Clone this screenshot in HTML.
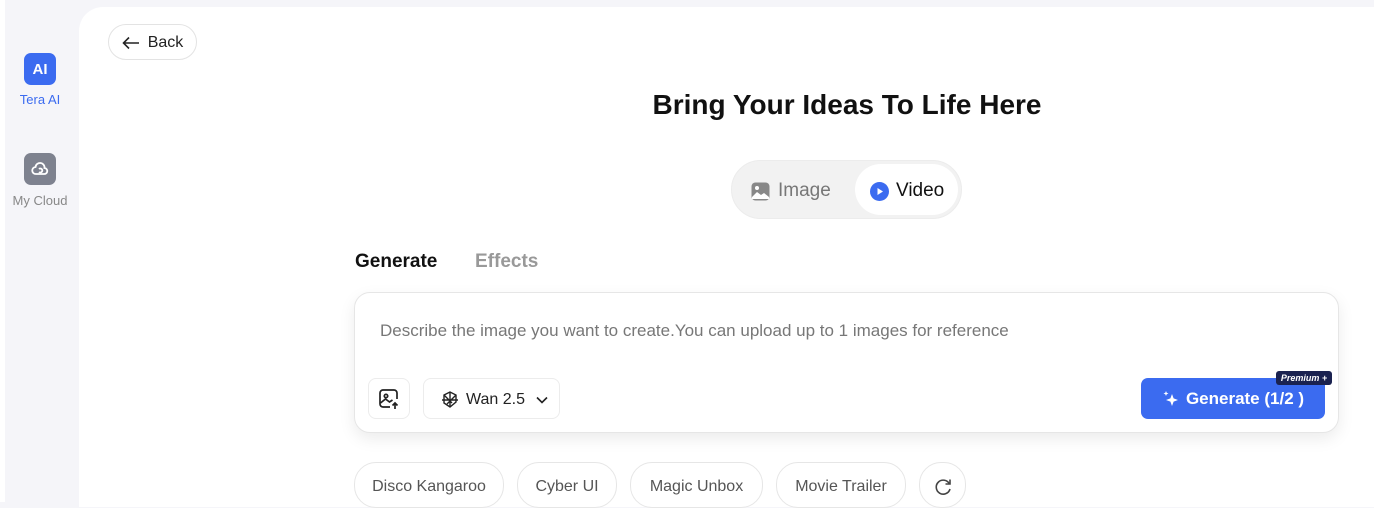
<!DOCTYPE html>
<html><head><meta charset="utf-8"><style>
*{box-sizing:border-box;margin:0;padding:0}
body{width:1374px;height:502px;overflow:hidden;background:#f5f5f9;font-family:"Liberation Sans","DejaVu Sans",sans-serif;position:relative}
.edge{position:absolute;left:0;top:0;width:5px;height:502px;background:#fff}
.main{position:absolute;left:79px;top:7px;width:1300px;height:500px;background:#fff;border-top-left-radius:24px}
.abs{position:absolute}
.sideicon{position:absolute;left:24px;width:32px;height:32px;border-radius:7px;display:flex;align-items:center;justify-content:center}
.sidelbl{position:absolute;width:80px;left:0;text-align:center;font-size:13px}
.pill{position:absolute;border:1px solid #e6e6e6;border-radius:22px;height:46px;top:462px;font-size:16px;color:#555;display:flex;align-items:center;justify-content:center;padding-top:4px}
</style></head><body>
<div class="edge"></div>
<div class="sideicon" style="top:53px;background:#3b6bf0;color:#fff;font-weight:bold;font-size:15px">AI</div>
<div class="sidelbl" style="top:92px;color:#3b6bf0">Tera AI</div>
<div class="sideicon" style="top:153px;background:#7e828f">
<svg width="20" height="20" viewBox="0 0 20 20" fill="none" stroke="#fff" stroke-width="1.8"><path d="M6 15h8a3 3 0 0 0 0.5-6A4.5 4.5 0 0 0 5.5 8 3.5 3.5 0 0 0 6 15z"/><path d="M9 13a2 2 0 1 0 0-3"/></svg></div>
<div class="sidelbl" style="top:193px;color:#888">My Cloud</div>
<div class="main"></div>
<div class="abs" style="left:108px;top:24px;width:89px;height:36px;border:1px solid #e3e3e3;border-radius:18px;display:flex;align-items:center;justify-content:center;gap:8px;font-size:16px;color:#222;padding-top:2px">
<svg width="18" height="14" viewBox="0 0 18 14" fill="none" stroke="#222" stroke-width="1.6"><path d="M17 7H2M7 1.5L1.5 7 7 12.5"/></svg>Back</div>
<div class="abs" style="left:0;width:1694px;top:89px;text-align:center;font-size:28px;font-weight:bold;color:#111">Bring Your Ideas To Life Here</div>
<div class="abs" style="left:731px;top:160px;width:231px;height:59px;background:#f2f2f2;border-radius:30px;border:1px solid #ececec"></div>
<div class="abs" style="left:855px;top:164px;width:103px;height:51px;background:#fff;border-radius:26px"></div>
<div class="abs" style="left:751px;top:180px;display:flex;align-items:center;gap:8px;font-size:19px;color:#777">
<svg width="19" height="19" viewBox="0 0 19 19"><rect x="0.5" y="0.5" width="18" height="18" rx="4" fill="#888"/><circle cx="6" cy="6" r="2" fill="#fff"/><path d="M1 15l5-5 4 3 3-2 5 4v2H1z" fill="#fff"/></svg>Image</div>
<div class="abs" style="left:870px;top:180px;display:flex;align-items:center;gap:7px;font-size:19px;color:#111">
<svg width="19" height="19" viewBox="0 0 19 19"><circle cx="9.5" cy="9.5" r="9.5" fill="#3b6bf0"/><path d="M7.5 6v7l5.5-3.5z" fill="#fff"/></svg>Video</div>
<div class="abs" style="left:355px;top:251px;font-size:19px;font-weight:bold;color:#111">Generate</div>
<div class="abs" style="left:475px;top:251px;font-size:19px;font-weight:bold;color:#999">Effects</div>
<div class="abs" style="left:354px;top:292px;width:985px;height:141px;border:1px solid #e6e6e6;border-radius:16px;box-shadow:0 6px 16px rgba(0,0,0,0.08);background:#fff"></div>
<div class="abs" style="left:380px;top:321px;font-size:17px;color:#777">Describe the image you want to create.You can upload up to 1 images for reference</div>
<div class="abs" style="left:368px;top:378px;width:42px;height:41px;border:1px solid #ececec;border-radius:8px;display:flex;align-items:center;justify-content:center">
<svg width="22" height="22" viewBox="0 0 22 22" fill="none" stroke="#222" stroke-width="1.7"><path d="M12 19H5a3 3 0 0 1-3-3V5a3 3 0 0 1 3-3h11a3 3 0 0 1 3 3v6"/><circle cx="8" cy="8" r="1.7"/><path d="M2.5 15l5-4 4 3 3-2"/><path d="M17 21v-6M14.5 17.5L17 15l2.5 2.5"/></svg></div>
<div class="abs" style="left:423px;top:378px;width:137px;height:41px;border:1px solid #ececec;border-radius:8px;display:flex;align-items:center;gap:6px;padding-left:16px;padding-top:2px;font-size:16px;color:#222">
<svg width="20" height="20" viewBox="0 0 20 20" fill="none" stroke="#222" stroke-width="1.4"><path d="M4 5l6-3 6 3v7l-6 5-6-4z"/><path d="M4 5l8 8M16 5l-9 9M10 2v15M2 10h16"/></svg>Wan 2.5
<svg width="14" height="10" viewBox="0 0 14 10" fill="none" stroke="#222" stroke-width="1.6" style="margin-left:4px"><path d="M2 2.5l5 5 5-5"/></svg></div>
<div class="abs" style="left:1141px;top:378px;width:184px;height:41px;background:#3b6bf0;border-radius:7px;display:flex;align-items:center;justify-content:center;gap:6px;color:#fff;font-weight:bold;font-size:17px">
<svg width="18" height="18" viewBox="0 0 18 18" fill="#fff"><path d="M10 4l1.6 4.4L16 10l-4.4 1.6L10 16l-1.6-4.4L4 10l4.4-1.6z"/><path d="M4 1l.7 1.8L6.5 3.5l-1.8.7L4 6l-.7-1.8L1.5 3.5l1.8-.7z"/></svg>Generate (1/2 )</div>
<div class="abs" style="left:1276px;top:371px;width:56px;height:14px;background:#1a2250;border-radius:3px;color:#fff;font-size:9px;font-weight:bold;font-style:italic;text-align:center;line-height:14px">Premium +</div>
<div class="pill" style="left:354px;width:150px">Disco Kangaroo</div>
<div class="pill" style="left:517px;width:100px">Cyber UI</div>
<div class="pill" style="left:630px;width:133px">Magic Unbox</div>
<div class="pill" style="left:776px;width:130px">Movie Trailer</div>
<div class="pill" style="left:919px;width:47px">
<svg width="20" height="20" viewBox="0 0 20 20" fill="none" stroke="#444" stroke-width="1.6"><path d="M16.5 7A7 7 0 1 0 17 12"/><path d="M17 2.5V7h-4.5"/></svg></div>
</body></html>
